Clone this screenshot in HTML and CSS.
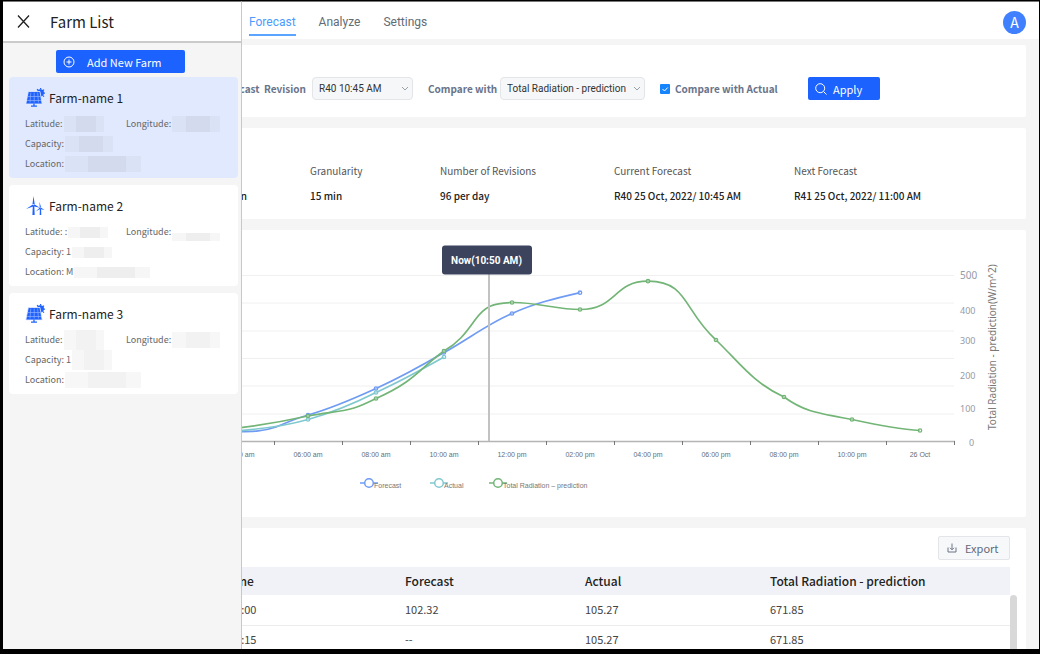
FILE: index.html
```
<!DOCTYPE html>
<html lang="en">
<head>
<meta charset="utf-8">
<title>Farm Forecast</title>
<link rel="stylesheet" href="styles.css">
</head>
<body>
<svg class="defs" width="0" height="0" aria-hidden="true">
  <symbol id="solar" viewBox="0 0 20 20">
    <circle cx="15.400" cy="4.800" r="3.600" fill="#1f62ff"/>
    <path d="M12 1.200l1.200 1.200M15.600 0v1.500M19 1.600l-1.200 1.200M20 5.200h-1.500M19 8.600l-1-1" stroke="#1f62ff" stroke-width="1.200"/>
    <path d="M3.300 3.500h11.700l2.200 12.500H.8z" fill="#1f62ff" stroke="#e8eeff" stroke-width=".8"/>
    <path d="M9.200 4.500v10M2.500 8.500h12.500M2 12.500h14M5.800 4.500l-.8 10M12.600 4.500l.9 10" stroke="#8fb0ff" stroke-width=".7"/>
    <path d="M9 15.500v2.500M6 18.200h6" stroke="#1f62ff" stroke-width="1.300"/>
  </symbol>
  <symbol id="wind" viewBox="0 0 20 20">
    <path d="M8.500 0l1.200 8H7.500zM8.200 8.200l.6 2L1 13zM9.300 8.300l5.500 3.500-6.500-1.600zM7.800 10.500h1.500l.4 8.500H7.400z" fill="#1f62ff"/>
    <path d="M14.500 5.800l1.500 5.400-1.300.6zM14.900 11.400l.6 1.400-4.800 2.700zM15.800 11.500l3.700 2.500-4.200-.9zM14.900 13h1.200l.2 6h-1.600z" fill="#1f62ff"/>
  </symbol>
</svg>
<div class="screen">
  <div class="app">
    <header class="topbar">
      <nav class="tabs">
        <a class="tab tab-active" href="#forecast">Forecast</a>
        <a class="tab" href="#analyze">Analyze</a>
        <a class="tab" href="#settings">Settings</a>
      </nav>
      <button class="avatar" type="button">A</button>
    </header>
    <main class="content">
      <form class="panel filters">
        <label class="filter-label revision-label" for="revision">Forecast&nbsp; Revision</label>
        <span class="select-box select-revision">
          <select id="revision"><option>R40 10:45 AM</option></select>
          <svg class="chevron" viewBox="0 0 8 5"><path d="M1 1l3 3 3-3" fill="none" stroke="#9aa0a8"/></svg>
        </span>
        <label class="filter-label compare-label" for="compare">Compare with</label>
        <span class="select-box select-compare">
          <select id="compare"><option>Total Radiation - prediction</option></select>
          <svg class="chevron" viewBox="0 0 8 5"><path d="M1 1l3 3 3-3" fill="none" stroke="#9aa0a8"/></svg>
        </span>
        <label class="filter-label check-label"><span class="check"><input type="checkbox" checked><svg class="tick" viewBox="0 0 10 10"><path d="M2.500 5l2 2 3.200-3.500" fill="none" stroke="#fff"/></svg></span>Compare with Actual</label>
        <button class="btn-primary apply" type="button">
          <svg class="icon-search" viewBox="0 0 12 12"><circle cx="5.200" cy="5.200" r="4.500" fill="none" stroke="#fff"/><path d="M8.500 8.500l3 3" stroke="#fff"/></svg>
          Apply
        </button>
      </form>

      <section class="panel stats">
        <div class="stat stat-first"><span class="stat-name">&nbsp;</span><span class="stat-value">10 min</span></div>
        <div class="stat"><span class="stat-name">Granularity</span><span class="stat-value">15 min</span></div>
        <div class="stat"><span class="stat-name">Number of Revisions</span><span class="stat-value">96 per day</span></div>
        <div class="stat"><span class="stat-name">Current Forecast</span><span class="stat-value">R40 25 Oct, 2022/ 10:45 AM</span></div>
        <div class="stat"><span class="stat-name">Next Forecast</span><span class="stat-value">R41 25 Oct, 2022/ 11:00 AM</span></div>
      </section>

      <section class="panel chart-panel">
        <svg class="chart" viewBox="16 230 1010 287">
          <g class="grid"><path d="M200 275.500H954M200 303H954M200 331H954M200 358.500H954M200 386H954M200 414H954"/></g>
          <path class="axis" d="M200 441.500H955"/>
          <path class="ticks" d="M274.500 441v4M342.500 441v4M410.500 441v4M478.500 441v4M546.500 441v4M614.500 441v4M682.500 441v4M750.500 441v4M818.500 441v4M886.500 441v4M954.500 441v4"/>
          <g class="x-labels">
            <text x="240" y="457">04:00 am</text><text x="308" y="457">06:00 am</text><text x="376" y="457">08:00 am</text><text x="444" y="457">10:00 am</text><text x="512" y="457">12:00 pm</text><text x="580" y="457">02:00 pm</text><text x="648" y="457">04:00 pm</text><text x="716" y="457">06:00 pm</text><text x="784" y="457">08:00 pm</text><text x="852" y="457">10:00 pm</text><text x="920" y="457">26 Oct</text>
          </g>
          <g class="y-labels">
            <text class="y-top" x="960" y="279">500</text><text x="960" y="314">400</text><text x="960" y="344">300</text><text x="960" y="379">200</text><text x="960" y="412">100</text><text x="969" y="446">0</text>
          </g>
          <text class="y-title" transform="translate(996 430) rotate(-90)">Total Radiation - prediction(W/m^2)</text>
          <g class="line forecast">
            <path d="M230 431.500C256 432 264 431 276 427C288 422 297 418 308 415C331 408.500 353 399 376 388.500C399 378 421 366 444 352.500C467 340 489 323 512 313.500C535 303 557 298 580 292.700"/>
            <circle cx="308" cy="415" r="1.700"/><circle cx="376" cy="388.500" r="1.700"/><circle cx="444" cy="352.500" r="1.700"/><circle cx="512" cy="313.500" r="1.700"/><circle cx="580" cy="292.700" r="1.700"/>
          </g>
          <g class="line actual">
            <path d="M230 431C262 429.500 285 426 308 419.500C331 413 353 404 376 392.500C399 382 421 370 444 357"/>
            <circle cx="308" cy="419.500" r="1.700"/><circle cx="376" cy="392.500" r="1.700"/><circle cx="444" cy="357" r="1.700"/>
          </g>
          <g class="line radiation">
            <path d="M230 429C262 425.500 285 421 308 416C328 412 339 412.500 354 408C362 405.500 369 402 376 398.500C416 381 421 367 444 351C458 343 465 334 475 320C485 306 493 303 512 302.500C535 302 557 309.500 580 309.500C617 309.500 613 281.200 648 281.200C688 281.200 683 310 716 340C739 362 753 383 784 397C805 412 817 413 852 419.500C875 424.500 897 429 920 430.500"/>
            <circle cx="308" cy="416" r="1.700"/><circle cx="376" cy="398.500" r="1.700"/><circle cx="444" cy="351" r="1.700"/><circle cx="512" cy="302.500" r="1.700"/><circle cx="580" cy="309.500" r="1.700"/><circle cx="648" cy="281.200" r="1.700"/><circle cx="716" cy="340" r="1.700"/><circle cx="784" cy="397" r="1.700"/><circle cx="852" cy="419.500" r="1.700"/><circle cx="920" cy="430.500" r="1.700"/>
          </g>
          <path class="now-line" d="M489 270V441"/>
          <rect class="now-box" x="442" y="245.500" width="90" height="29" rx="3"/>
          <text class="now-text" x="486.500" y="264">Now(10:50 AM)</text>
          <g class="legend">
            <g class="key forecast"><path d="M360 483h18"/><circle cx="369" cy="483" r="4.300"/></g><text x="374" y="488">Forecast</text>
            <g class="key actual"><path d="M430 483h18"/><circle cx="439" cy="483" r="4.300"/></g><text x="444" y="488">Actual</text>
            <g class="key radiation"><path d="M489 483h18"/><circle cx="498" cy="483" r="4.300"/></g><text x="503" y="488">Total Radiation – prediction</text>
          </g>
        </svg>
      </section>

      <section class="panel table-panel">
        <button class="export" type="button">
          <svg class="icon-export" viewBox="0 0 10 10"><path d="M1 4.500V9h8V4.500M5 .5v6M3 4.800l2 2 2-2" fill="none" stroke="#6c7587"/></svg>
          Export
        </button>
        <div class="table-scroll">
          <table class="data">
            <thead><tr><th class="col-time">Time</th><th class="col-forecast">Forecast</th><th class="col-actual">Actual</th><th>Total Radiation - prediction</th></tr></thead>
            <tbody>
              <tr><td class="col-time">00:00</td><td>102.32</td><td>105.27</td><td>671.85</td></tr>
              <tr><td class="col-time">00:15</td><td>--</td><td>105.27</td><td>671.85</td></tr>
            </tbody>
          </table>
          <div class="scrollbar"></div>
        </div>
      </section>
    </main>
  </div>

  <aside class="drawer">
    <header class="drawer-head">
      <button class="close" type="button" aria-label="Close"><svg viewBox="0 0 13 13"><path d="M1 .5l11 12M12 .5l-11 12" stroke="#222" stroke-width="1.300"/></svg></button>
      <h1 class="drawer-title">Farm List</h1>
    </header>
    <div class="drawer-body">
      <button class="btn-primary add" type="button">
        <svg class="icon-add" viewBox="0 0 12 12"><circle cx="6" cy="6" r="5" fill="none" stroke="#fff"/><path d="M3.500 6h5M6 3.500v5" stroke="#fff"/></svg>
        Add New Farm
      </button>
      <article class="farm farm-selected">
        <h2 class="farm-name"><svg class="farm-icon"><use href="#solar"/></svg>Farm-name 1</h2>
        <div class="meta"><span class="meta-left">Latitude:<i class="mask mask-s"></i></span><span>Longitude:<i class="mask mask-m"></i></span></div>
        <div class="meta"><span>Capacity:<i class="mask mask-m"></i></span></div>
        <div class="meta"><span>Location:<i class="mask mask-l"></i></span></div>
      </article>
      <article class="farm farm-wind">
        <h2 class="farm-name"><svg class="farm-icon"><use href="#wind"/></svg>Farm-name 2</h2>
        <div class="meta"><span class="meta-left">Latitude: :<i class="mask mask-s"></i></span><span>Longitude:<i class="mask mask-m mask-low"></i></span></div>
        <div class="meta"><span>Capacity: 1<i class="mask mask-s"></i></span></div>
        <div class="meta"><span>Location: M<i class="mask mask-l"></i></span></div>
      </article>
      <article class="farm farm-pale">
        <h2 class="farm-name"><svg class="farm-icon"><use href="#solar"/></svg>Farm-name 3</h2>
        <div class="meta"><span class="meta-left">Latitude:<i class="mask mask-s"></i></span><span>Longitude:<i class="mask mask-m"></i></span></div>
        <div class="meta"><span>Capacity: 1<i class="mask mask-s"></i></span></div>
        <div class="meta"><span>Location:<i class="mask mask-l"></i></span></div>
      </article>
    </div>
  </aside>
</div>
</body>
</html>
```
FILE: styles.css
```
* { box-sizing: border-box; }
body { margin: 0; background: #fff; font-family: "Noto Sans CJK SC", "Noto Sans", sans-serif; color: #222; }
button, select, input { font: inherit; margin: 0; }
button { cursor: pointer; }
h1, h2 { margin: 0; font-weight: 400; }
svg { display: block; }
.defs { position: absolute; }

.screen {
  position: relative;
  height: calc(100vh - 2px);
  margin-right: 5px;
  border: solid #000;
  border-width: 1px 1px 5px 3px;
  background: #f5f5f5;
  overflow: hidden;
}

/* Top bar */
.topbar { display: flex; justify-content: space-between; align-items: center; height: 38px; padding: 4px 13px 0 246px; background: #fff; border-top: 1px solid #777; }
.tabs { display: flex; gap: 23px; align-self: stretch; }
.tab { display: block; height: 30px; padding-top: 2px; font: 12px/28px Roboto, sans-serif; color: #626c74; text-decoration: none; border-bottom: 2px solid transparent; }
.tab-active { color: #4b9bff; border-color: #5aa5ff; }
.avatar { width: 23px; height: 23px; padding: 0; border: 0; border-radius: 50%; background: #4080ff; color: #fff; font-size: 14px; line-height: 23px; }

.content { display: flex; flex-direction: column; gap: 11px; padding: 6px 13px 0; }
.panel { background: #fff; border-radius: 2px; }

/* Filters */
.filters { display: flex; align-items: center; height: 72px; padding-top: 15px; }
.filter-label { font-size: 10px; line-height: 20px; font-weight: 700; color: #69748a; white-space: nowrap; }
.revision-label { width: 290px; margin-right: 6px; text-align: right; }
.compare-label { width: 72px; margin: 0 0 0 15px; }
.check-label { display: flex; align-items: center; gap: 5px; width: 117px; margin-left: 15px; }
.select-box { position: relative; }
.select-revision { width: 101px; }
.select-compare { width: 145px; }
.select-box select { display: block; width: 100%; height: 23px; padding: 1px 0 0 6px; appearance: none; border: 1px solid #e3e5e8; border-radius: 4px; background: #f6f7f9; color: #333; font: 10px/20px Roboto, sans-serif; }
.chevron { position: absolute; right: 4px; top: 9px; width: 8px; height: 5px; }
.check { position: relative; width: 10px; height: 10px; }
.check input { display: block; width: 10px; height: 10px; appearance: none; background: #1684fc; border-radius: 1px; }
.tick { position: absolute; left: 0; top: 0; width: 10px; height: 10px; }
.btn-primary { display: flex; align-items: center; height: 23px; border: 0; border-radius: 2px; background: #1c62ff; color: #fff; font-size: 11px; line-height: 20px; }
.apply { width: 72px; margin-left: 31px; padding: 0 7px; gap: 6px; }
.icon-search { width: 12px; height: 12px; }

/* Stats */
.stats { display: flex; height: 91px; padding-top: 33px; }
.stat { display: flex; flex-direction: column; gap: 5px; width: 174px; font-size: 10px; line-height: 20px; white-space: nowrap; }
.stat-first { width: 294px; padding-right: 63px; text-align: right; }
.stat:nth-child(2) { width: 130px; }
.stat:nth-child(4) { width: 180px; }
.stat-name { color: #555; }
.stat-value { color: #222; font-weight: 500; }

/* Chart */
.chart { width: 100%; height: auto; }
.grid path { stroke: #f0f0f0; fill: none; }
.axis { stroke: #b4b4b4; stroke-width: 1.5; }
.ticks { stroke: #777; }
.now-line { stroke: #c2c2c2; stroke-width: 2; }
.x-labels text { font: 7px "Liberation Sans", sans-serif; fill: #666e76; text-anchor: middle; }
.y-labels text { font: 9px "Noto Sans", sans-serif; fill: #949ba8; }
.y-labels .y-top { font-size: 10px; }
.y-title { font: 10px "Noto Sans", sans-serif; fill: #777; }
.line path { fill: none; stroke: currentColor; stroke-width: 1.7; }
.line circle { fill: #fff; fill-opacity: .4; stroke: currentColor; stroke-width: 1.3; }
.forecast { color: #6f9bf3; }
.actual { color: #80c8cf; }
.radiation { color: #72b576; }
.now-box { fill: #3c435d; }
.now-text { font: 700 10px Roboto, sans-serif; fill: #fff; text-anchor: middle; }
.key path { stroke: currentColor; stroke-width: 1.5; }
.key circle { fill: #fff; stroke: currentColor; stroke-width: 1.5; }
.legend text { font: 7px "Liberation Sans", sans-serif; fill: #777; }

/* Table */
.table-panel { padding: 8px 9px 0 16px; }
.export { display: flex; align-items: center; gap: 8px; width: 72px; height: 24px; margin: 0 7px 7px auto; padding: 0 8px; border: 1px solid #e3e5e9; border-radius: 2px; background: #f6f8fa; color: #626b7d; font-size: 11px; line-height: 20px; }
.icon-export { width: 10px; height: 10px; }
.table-scroll { display: flex; }
.data { flex: 1; border-collapse: collapse; table-layout: fixed; text-align: left; }
.data th { height: 28px; padding: 0; background: #f1f2f7; font-size: 12px; line-height: 20px; font-weight: 500; color: #222; }
.data td { height: 30px; padding: 0 0 2px; border-bottom: 1px solid #ececec; font-size: 11px; line-height: 20px; color: #444; }
.data .col-time { width: 373px; padding-left: 193px; }
.data td.col-time { padding-left: 197px; }
.col-forecast { width: 180px; }
.col-actual { width: 185px; }
.scrollbar { width: 7px; margin-top: 28px; border-radius: 4px 4px 0 0; background: #d8d8d8; }

/* Drawer */
.drawer { position: absolute; left: 0; top: 0; bottom: 0; width: 239px; background: #f5f5f5; border-top: 1px solid #777; border-right: 1px solid #c8c8c8; }
.drawer-head { display: flex; align-items: center; gap: 20px; height: 41px; padding: 0 14px; background: #fff; border-bottom: 2px solid #cbcbcb; }
.close { width: 13px; height: 13px; padding: 0; border: 0; background: none; }
.drawer-title { font-size: 15px; line-height: 24px; }
.drawer-body { display: flex; flex-direction: column; gap: 7px; padding: 7px 3px 0 6px; }
.add { width: 129px; margin: 0 0 -3px 47px; gap: 12px; padding: 0 7px; }
.icon-add { width: 12px; height: 12px; }
.farm { --mask: #eeeeee; --mask-soft: #f6f6f6; height: 101px; padding: 11px 16px 0; border-radius: 4px; background: #fff; }
.farm-selected { --mask: #d3daee; --mask-soft: #dae2f6; background: #e1e9ff; }
.farm-pale { --mask: #f2f2f2; --mask-soft: #f7f7f7; }
.farm-name { display: flex; align-items: center; gap: 4px; height: 19px; margin-bottom: 7px; font-size: 12px; line-height: 19px; }
.farm-icon { width: 20px; height: 20px; }
.meta { display: flex; height: 20px; align-items: center; font-size: 9px; line-height: 16px; color: #666; }
.meta span { display: flex; align-items: center; white-space: nowrap; }
.meta .meta-left { width: 101px; }
.mask { height: 16px; margin-left: 1px; background: linear-gradient(90deg, var(--mask-soft) 30%, var(--mask) 30% 80%, var(--mask-soft) 80%); }
.farm-wind .mask { height: 11px; }
.farm-pale .mask-s { height: 20px; }
.mask-s { width: 40px; }
.mask-m { width: 48px; }
.mask-l { width: 76px; }
.farm-wind .mask-low { height: 8px; margin-top: 9px; }
```
